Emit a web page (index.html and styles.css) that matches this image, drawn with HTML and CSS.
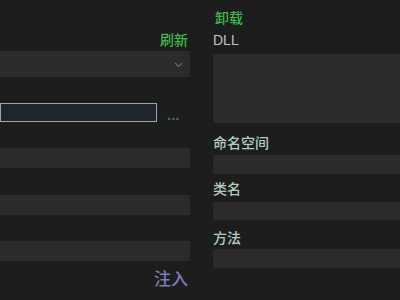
FILE: index.html
```html
<!DOCTYPE html>
<html>
<head>
<meta charset="utf-8">
<link rel="stylesheet" href="styles.css">
</head>
<body>
<div class="page">
  <div class="left">
    <div class="head-row"><span class="link green">刷新</span></div>
    <div class="dropdown">
      <svg class="chev" width="9" height="6" viewBox="0 0 9 6"><path d="M1 1 L4.5 4.5 L8 1" fill="none" stroke="#6a6a6a" stroke-width="1.2"/></svg>
    </div>
    <div class="path-row">
      <div class="pathbox"></div>
      <span class="dots">...</span>
    </div>
    <div class="field f1"></div>
    <div class="field f2"></div>
    <div class="field f3"></div>
    <div class="inject-row"><span class="inject">注入</span></div>
  </div>
  <div class="right">
    <div class="unload green">卸载</div>
    <div class="label dll">DLL</div>
    <div class="dllbox"></div>
    <div class="label cjk l1">命名空间</div>
    <div class="field r1"></div>
    <div class="label cjk l2">类名</div>
    <div class="field r2"></div>
    <div class="label cjk l3">方法</div>
    <div class="field r3"></div>
  </div>
</div>
</body>
</html>
```
FILE: styles.css
```css
html, body {
  margin: 0;
  padding: 0;
  background: #1d1d1d;
  width: 400px;
  height: 300px;
  overflow: hidden;
  font-family: "Noto Sans CJK SC", "Noto Sans", sans-serif;
  font-size: 14px;
}
.page {
  display: flex;
  gap: 23px;
}
.left {
  width: 190px;
  display: flex;
  flex-direction: column;
  padding-top: 29px;
}
.head-row {
  height: 20px;
  line-height: 20px;
  display: flex;
  justify-content: flex-end;
  padding-right: 2px;
}
.green {
  color: #3dbb4a;
  font-weight: 500;
}
.dropdown {
  margin-top: 2px;
  height: 26px;
  background: #2b2b2b;
  display: flex;
  align-items: center;
  justify-content: flex-end;
  padding-right: 7px;
}
.chev {
  display: block;
  margin-top: 2px;
}
.path-row {
  margin-top: 26px;
  height: 19px;
  display: flex;
  align-items: center;
}
.pathbox {
  width: 155px;
  height: 17px;
  border: 1px solid #9aa7b3;
  background: #1f252b;
  box-sizing: content-box;
}
.dots {
  margin-left: 10px;
  color: #357a48;
  font-family: "Liberation Sans", sans-serif;
  font-size: 15px;
  font-weight: bold;
  line-height: 12px;
  margin-top: 4px;
}
.field {
  background: #2b2b2b;
  height: 20px;
}
.f1 { margin-top: 26px; }
.f2 { margin-top: 27px; }
.f3 { margin-top: 26px; }
.inject-row {
  display: flex;
  justify-content: flex-end;
  padding-right: 2px;
  margin-top: 5px;
}
.inject {
  color: #7d7fb4;
  font-size: 17px;
  line-height: 24px;
  font-weight: 500;
}
.right {
  flex: 1;
  display: flex;
  flex-direction: column;
  padding-top: 7px;
}
.unload {
  height: 20px;
  line-height: 20px;
  padding-left: 2px;
}
.label {
  color: #c4c8c6;
  height: 20px;
  line-height: 20px;
  font-weight: 500;
}
.dll {
  margin-top: 3px;
  font-family: "Liberation Sans", sans-serif;
  font-size: 14px;
  font-weight: normal;
  color: #c4c4c4;
}
.cjk {
  color: #b3cbbd;
}
.dllbox {
  margin-top: 4px;
  height: 69px;
  background: #2b2b2b;
}
.l1 { margin-top: 9px; }
.r1 { margin-top: 3px; height: 19px; }
.l2 { margin-top: 4px; }
.r2 { margin-top: 4px; height: 18px; }
.l3 { margin-top: 7px; }
.r3 { margin-top: 2px; height: 19px; }
```
